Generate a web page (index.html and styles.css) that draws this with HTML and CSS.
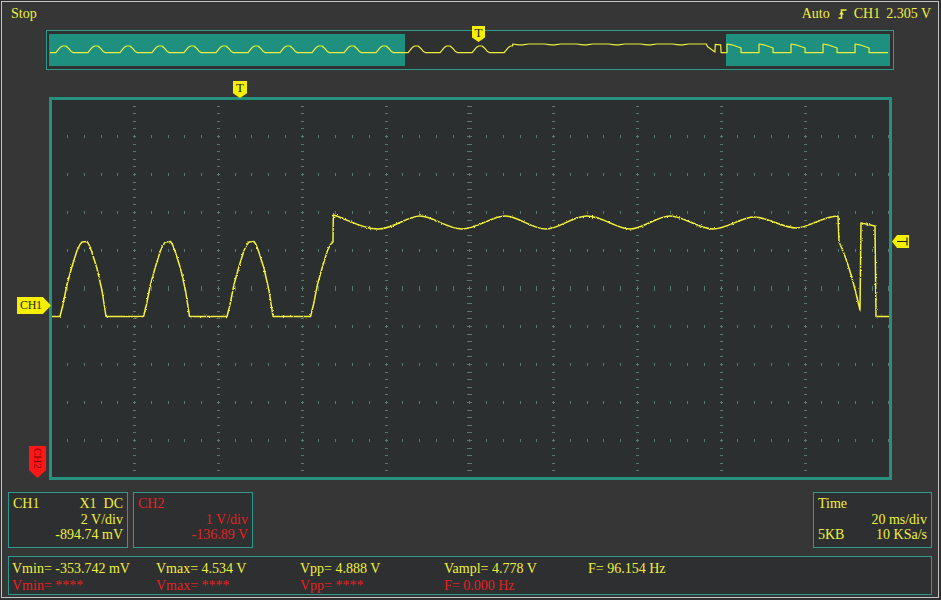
FILE: index.html
```html
<!DOCTYPE html>
<html>
<head>
<meta charset="utf-8">
<link rel="stylesheet" href="styles.css">
</head>
<body>
<div class="app">
  <header class="topbar">
    <span class="status">Stop</span>
    <div class="trig">
      <span>Auto</span>
      <svg class="edge" viewBox="0 0 9 10" width="9" height="10"><path d="M0.5 9 H3.5 V1 H8.5" fill="none" stroke="#f0f040" stroke-width="1.6"/><path d="M1 5.5 L3.5 2.5 L6 5.5 Z" fill="#f0f040"/></svg>
      <span class="ch">CH1</span>
      <span>2.305 V</span>
    </div>
  </header>

  <div class="overview">
    <svg viewBox="0 0 846 38" width="846" height="38">
      <rect x="2" y="3" width="356" height="32" fill="#1f8f7f"/>
      <rect x="679" y="3" width="164" height="32" fill="#1f8f7f"/>
      <path fill="none" stroke="#eef03c" stroke-width="1.2" stroke-linejoin="round"
        d="M3,21.7 H8.9
        l2,-2.5 l2.5,-3 l2,-1.2 l3.5,0 l2.5,2.2 l2.5,3 l2.5,1.5 l14.52,0
        l2,-2.5 l2.5,-3 l2,-1.2 l3.5,0 l2.5,2.2 l2.5,3 l2.5,1.5 l14.52,0
        l2,-2.5 l2.5,-3 l2,-1.2 l3.5,0 l2.5,2.2 l2.5,3 l2.5,1.5 l14.52,0
        l2,-2.5 l2.5,-3 l2,-1.2 l3.5,0 l2.5,2.2 l2.5,3 l2.5,1.5 l14.52,0
        l2,-2.5 l2.5,-3 l2,-1.2 l3.5,0 l2.5,2.2 l2.5,3 l2.5,1.5 l14.52,0
        l2,-2.5 l2.5,-3 l2,-1.2 l3.5,0 l2.5,2.2 l2.5,3 l2.5,1.5 l14.52,0
        l2,-2.5 l2.5,-3 l2,-1.2 l3.5,0 l2.5,2.2 l2.5,3 l2.5,1.5 l14.52,0
        l2,-2.5 l2.5,-3 l2,-1.2 l3.5,0 l2.5,2.2 l2.5,3 l2.5,1.5 l14.52,0
        l2,-2.5 l2.5,-3 l2,-1.2 l3.5,0 l2.5,2.2 l2.5,3 l2.5,1.5 l14.52,0
        l2,-2.5 l2.5,-3 l2,-1.2 l3.5,0 l2.5,2.2 l2.5,3 l2.5,1.5 l14.52,0
        l2,-2.5 l2.5,-3 l2,-1.2 l3.5,0 l2.5,2.2 l2.5,3 l2.5,1.5 l14.52,0
        l2,-2.5 l2.5,-3 l2,-1.2 l3.5,0 l2.5,2.2 l2.5,3 l2.5,1.5 l14.52,0
        l2,-2.5 l2.5,-3 l2,-1.2 l3.5,0 l2.5,2.2 l2.5,3 l2.5,1.5 l14.52,0
        l2,-2.5 l2.5,-3 l2,-1.2 l3.5,0 l2.5,2.2 l2.5,3 l2.5,1.5 l14.52,0
        l2,-2.5 l2.5,-3 l2,-1.2 l2,0 V13
        l6,0.8 l4,0 l6,-0.8 l16,0 l6,0.8 l4,0 l6,-0.8 l16,0 l6,0.8 l4,0 l6,-0.8 l16,0
        l6,0.8 l4,0 l6,-0.8 l16,0 l6,0.8 l4,0 l6,-0.8 l16,0 l6,0.8 l4,0 l6,-0.8 l16,0
        L659.4,13 L660.4,15.5 L667.9,21.1 L668.3,13.3 L673.7,13.8 L674.1,21.7 H680
        v-8.7 l5,0.8 l9,3.2 v4.7 h18.02
        v-8.7 l5,0.8 l9,3.2 v4.7 h18.02
        v-8.7 l5,0.8 l9,3.2 v4.7 h18.02
        v-8.7 l5,0.8 l9,3.2 v4.7 h18.02
        v-8.7 l5,0.8 l9,3.2 v4.7 h18.02
        H841"/>
    </svg>
    <div class="mk mk-t ov-t"><span>T</span></div>
  </div>

  <div class="screen">
    <svg class="grid" viewBox="0 0 837 377" width="837" height="377">
      <defs>
        <filter id="jit" x="-2%" y="-10%" width="104%" height="120%">
          <feTurbulence type="fractalNoise" baseFrequency="0.7" numOctaves="2" seed="4"/>
          <feDisplacementMap in="SourceGraphic" scale="2.4" xChannelSelector="R" yChannelSelector="G"/>
        </filter>
      </defs>
      <g stroke="#58786f" shape-rendering="crispEdges">
        <g stroke-width="3" stroke-dasharray="1 6.6" stroke-dashoffset="2">
          <line x1="82.6" y1="0" x2="82.6" y2="377"/>
          <line x1="166.4" y1="0" x2="166.4" y2="377"/>
          <line x1="250.2" y1="0" x2="250.2" y2="377"/>
          <line x1="334" y1="0" x2="334" y2="377"/>
          <line x1="501.6" y1="0" x2="501.6" y2="377"/>
          <line x1="585.4" y1="0" x2="585.4" y2="377"/>
          <line x1="669.2" y1="0" x2="669.2" y2="377"/>
          <line x1="753" y1="0" x2="753" y2="377"/>
        </g>
        <line x1="417.8" y1="0" x2="417.8" y2="377" stroke-width="5" stroke-dasharray="1 6.6" stroke-dashoffset="2"/>
        <g stroke-width="3" stroke-dasharray="1 15.76" stroke-dashoffset="1.7">
          <line x1="0" y1="36.5" x2="837" y2="36.5"/>
          <line x1="0" y1="74.5" x2="837" y2="74.5"/>
          <line x1="0" y1="112.5" x2="837" y2="112.5"/>
          <line x1="0" y1="150.5" x2="837" y2="150.5"/>
          <line x1="0" y1="226.5" x2="837" y2="226.5"/>
          <line x1="0" y1="264.5" x2="837" y2="264.5"/>
          <line x1="0" y1="302.5" x2="837" y2="302.5"/>
          <line x1="0" y1="340.5" x2="837" y2="340.5"/>
        </g>
        <line x1="0" y1="188.5" x2="837" y2="188.5" stroke-width="5" stroke-dasharray="1 15.76" stroke-dashoffset="1.7"/>
      </g>
      <path filter="url(#jit)" fill="none" stroke="#f4f23a" stroke-width="1.5" stroke-linejoin="round"
        d="M0,216.5 L8,216.5
        L11,204.5 L15,184.5 L20,166.5 L25,150.5 L28,144.5 L30,142 L35,141.5 L37,144.5 L40,152.5 L45,168.5 L50,190.5 L54,216.5
        L91.5,216.5 L94.5,204.5 L98.5,184.5 L103.5,166.5 L108.5,150.5 L111.5,144.5 L113.5,142 L118.5,141.5 L120.5,144.5 L123.5,152.5 L128.5,168.5 L133.5,190.5 L137.5,216.5
        L175,216.5 L178,204.5 L182,184.5 L187,166.5 L192,150.5 L195,144.5 L197,142 L202,141.5 L204,144.5 L207,152.5 L212,168.5 L217,190.5 L221,216.5
        L258.5,216.5 L261.5,204.5 L265.5,184.5 L270.5,166.5 L275.5,150.5 L278.5,144.5 L281,142 L281.3,115
        C295,119 310,129 326,129 S355,116 368,116 S395,129 410,129 S440,116 453,116 S480,129 494,129 S520,116 535,116 S565,129 578,129 S605,116 618,116 S648,129 661,129 S690,117 702,117 S732,128 744,128 S772,116 786,116
        L787,142 C792,152 800,175 808,210 L809,123 L823,126 L824,216.5 L837,216.5"/>
    </svg>
    <div class="mk mk-t main-t"><span>T</span></div>
    <div class="mk ch1-mk">CH1</div>
    <div class="mk lvl-mk"><svg viewBox="0 0 17 13" width="17" height="13"><path d="M5 6.5 H15 M15 2.5 V10.5" stroke="#222" stroke-width="1.2" fill="none"/></svg></div>
    <div class="mk ch2-mk"><span>CH2</span></div>
  </div>

  <div class="panels">
    <div class="panel">
      <div class="row"><span>CH1</span><span class="pre">X1  DC</span></div>
      <div class="r">2 V/div</div>
      <div class="r">-894.74 mV</div>
    </div>
    <div class="panel red">
      <div class="row"><span>CH2</span></div>
      <div class="r">1 V/div</div>
      <div class="r">-136.89 V</div>
    </div>
    <div class="panel time">
      <div class="row"><span>Time</span></div>
      <div class="r">20 ms/div</div>
      <div class="row"><span>5KB</span><span>10 KSa/s</span></div>
    </div>
  </div>

  <div class="measure">
    <span>Vmin= -353.742 mV</span>
    <span>Vmax= 4.534 V</span>
    <span>Vpp= 4.888 V</span>
    <span>Vampl= 4.778 V</span>
    <span>F= 96.154 Hz</span>
    <span class="red">Vmin= ****</span>
    <span class="red">Vmax= ****</span>
    <span class="red">Vpp= ****</span>
    <span class="red">F= 0.000 Hz</span>
  </div>
</div>
</body>
</html>
```
FILE: styles.css
```css
html, body {
  margin: 0;
  padding: 0;
  background: #2f2f2f;
}

.app {
  margin: 1px;
  width: 938px;
  height: 597px;
  box-sizing: border-box;
  border: 1px solid #c4c4c4;
  background: #363636;
  font-family: "Liberation Serif", "Times New Roman", serif;
  font-size: 14px;
  color: #f0f040;
  overflow: hidden;
}

.topbar {
  display: flex;
  justify-content: space-between;
  align-items: flex-start;
  height: 28px;
  box-sizing: border-box;
  padding: 4px 7px 0 9px;
  line-height: 16px;
}

.trig {
  display: flex;
  align-items: center;
}

.trig .edge {
  margin: 0 7px 0 8px;
}

.trig .ch {
  margin-right: 6px;
}

.overview {
  position: relative;
  margin-left: 44px;
  width: 848px;
  height: 40px;
  box-sizing: border-box;
  border: 1px solid #2f9a8b;
  background: #2f3131;
}

.overview svg {
  display: block;
}

.screen {
  position: relative;
  margin: 27px 0 0 47px;
  width: 843px;
  height: 383px;
  box-sizing: border-box;
  border: 3px solid #26917f;
  background: #2c2f30;
}

.screen svg.grid {
  display: block;
}

.mk {
  position: absolute;
  box-sizing: border-box;
}

.mk-t {
  background: #f6f000;
  clip-path: polygon(0 0, 100% 0, 100% 72%, 50% 100%, 0 72%);
  color: #1e1e1e;
  text-align: center;
  font-size: 13px;
  line-height: 13px;
}

.ov-t {
  left: 425px;
  top: -5px;
  width: 13px;
  height: 16px;
}

.main-t {
  left: 181px;
  top: -19px;
  width: 14px;
  height: 17px;
}

.ch1-mk {
  left: -35px;
  top: 197px;
  width: 34px;
  height: 17px;
  padding-left: 3px;
  background: #f6f000;
  clip-path: polygon(0 0, 76% 0, 100% 50%, 76% 100%, 0 100%);
  color: #1e1e1e;
  font-size: 12px;
  line-height: 17px;
  letter-spacing: -0.3px;
}

.lvl-mk {
  left: 840px;
  top: 135px;
  width: 17px;
  height: 13px;
  background: #f6f000;
  clip-path: polygon(0 50%, 30% 0, 100% 0, 100% 100%, 30% 100%);
}

.lvl-mk svg {
  display: block;
}

.ch2-mk {
  left: -23px;
  top: 346px;
  width: 17px;
  height: 32px;
  background: #ff1616;
  clip-path: polygon(0 0, 100% 0, 100% 75%, 50% 100%, 0 75%);
  color: #7a0000;
  font-size: 11px;
  display: flex;
  justify-content: center;
  padding-top: 2px;
}

.ch2-mk span {
  writing-mode: vertical-rl;
  line-height: 17px;
}

.panels {
  display: flex;
  gap: 5px;
  margin: 12px 6px 0 6px;
}

.panel {
  width: 120px;
  height: 56px;
  box-sizing: border-box;
  border: 1px solid #2f9a8b;
  background: #2d2f30;
  padding: 3px 4px 0 4px;
  line-height: 15.5px;
}

.panel .row {
  display: flex;
  justify-content: space-between;
}

.panel .r {
  text-align: right;
}

.pre {
  white-space: pre;
}

.panel.time {
  margin-left: auto;
  width: 119px;
}

.red {
  color: #e42222;
}

.measure {
  margin: 8px 6px 0 6px;
  height: 39px;
  box-sizing: border-box;
  border: 1px solid #2f9a8b;
  background: #2d2f30;
  padding: 4px 3px 0 3px;
  display: grid;
  grid-template-columns: repeat(5, 144px);
  line-height: 15.5px;
  white-space: nowrap;
}
```
